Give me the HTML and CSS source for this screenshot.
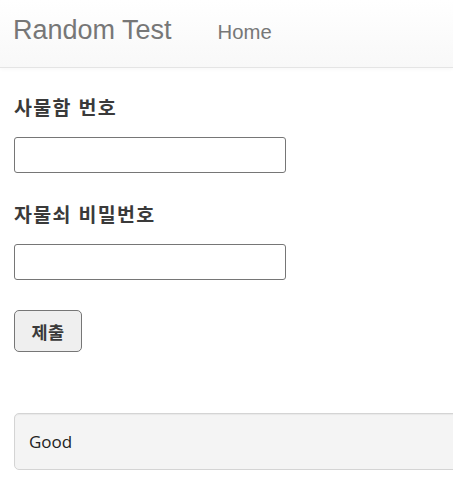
FILE: index.html
```html
<!DOCTYPE html>
<html lang="ko">
<head>
<meta charset="utf-8">
<title>Random Test</title>
<link rel="stylesheet" href="styles.css">
</head>
<body>
<div class="page">
  <nav class="navbar">
    <a class="brand" href="#">Random Test</a>
    <a class="nav-link" href="#">Home</a>
  </nav>
  <main class="content">
    <form class="form">
      <div class="form-group">
        <label class="label" for="locker">사물함 번호</label>
        <input class="input" id="locker" type="text">
      </div>
      <div class="form-group">
        <label class="label" for="pw">자물쇠 비밀번호</label>
        <input class="input" id="pw" type="text">
      </div>
      <button class="btn" type="button">제출</button>
    </form>
    <div class="well">Good</div>
  </main>
</div>
</body>
</html>
```

FILE: styles.css
```css
html, body {
  margin: 0;
  padding: 0;
  background: #fff;
}

.page {
  overflow: hidden;
  font-family: "Liberation Sans", Arial, sans-serif;
}

.navbar {
  height: 67px;
  border-bottom: 1px solid #e4e4e4;
  background: linear-gradient(to bottom, #ffffff 0%, #f8f8f8 100%);
  box-shadow: 0 1px 4px rgba(0, 0, 0, 0.04);
  display: flex;
  align-items: baseline;
  padding-left: 13px;
  box-sizing: content-box;
}

.brand {
  font-size: 27px;
  color: #777;
  text-decoration: none;
  line-height: 61px;
  margin-right: 46px;
}

.nav-link {
  font-size: 20.3px;
  color: #777;
  text-decoration: none;
}

.content {
  padding: 25px 0 0 14px;
}

.form-group {
  display: flex;
  flex-direction: column;
  align-items: flex-start;
  margin-bottom: 27px;
}

.label {
  font-family: "Noto Sans CJK KR", "Noto Sans", sans-serif;
  font-weight: 700;
  font-size: 19.5px;
  letter-spacing: 1.3px;
  line-height: 27px;
  color: #3a3a3a;
  margin-bottom: 17px;
}

.input {
  box-sizing: border-box;
  width: 272px;
  height: 36px;
  margin: 0;
  border: 1px solid #767676;
  border-radius: 3px;
  background: #fff;
  padding: 0 6px;
}

.btn {
  display: block;
  box-sizing: border-box;
  width: 68px;
  height: 42px;
  margin: 30px 0 0;
  padding: 0;
  border: 1px solid #767676;
  border-radius: 5px;
  background: #efefef;
  color: #3a3a3a;
  font-family: "Noto Sans CJK KR", "Noto Sans", sans-serif;
  font-weight: 700;
  font-size: 17.5px;
  letter-spacing: 0.5px;
}

.well {
  margin-top: 61px;
  margin-right: -20px;
  height: 55px;
  box-sizing: content-box;
  border: 1px solid #d4d4d4;
  border-radius: 5px;
  background: #f4f4f4;
  box-shadow: inset 0 1px 1px rgba(0, 0, 0, 0.05);
  padding: 0 14px;
  display: flex;
  align-items: center;
  font-family: "Open Sans", sans-serif;
  font-size: 17px;
  color: #222;
}
```
